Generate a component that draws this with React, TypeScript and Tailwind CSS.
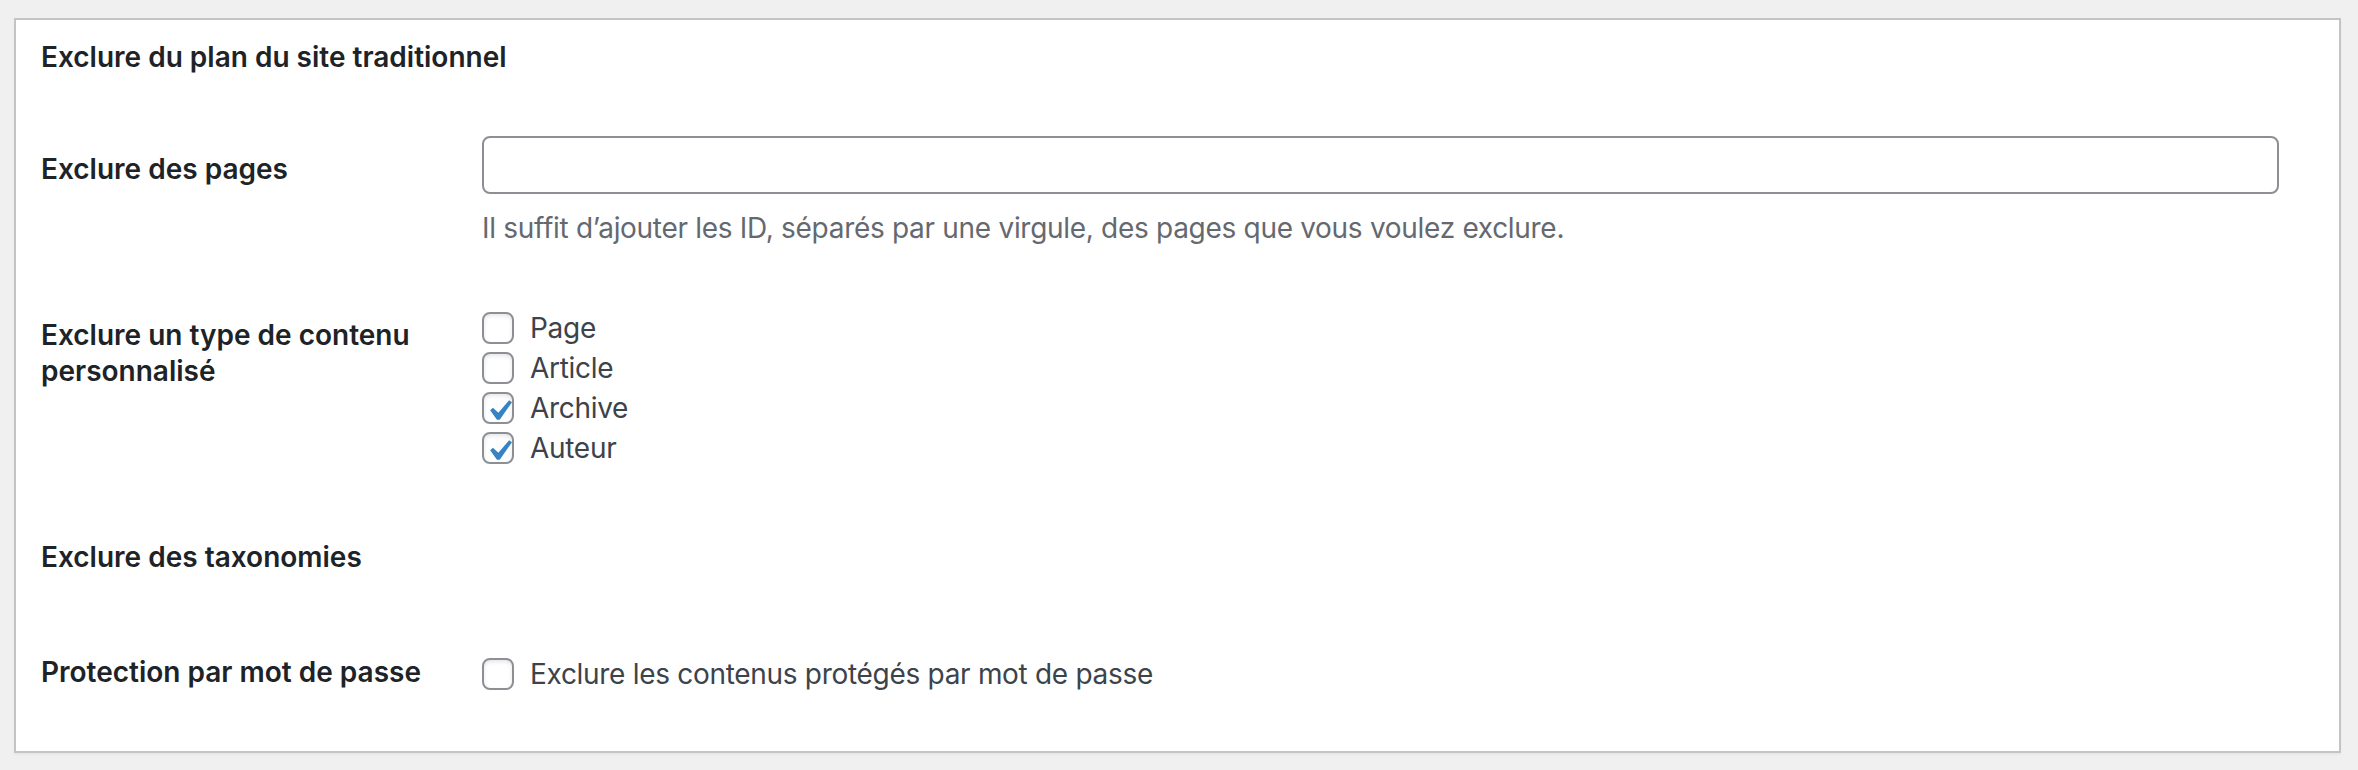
import { useState } from 'react';

const font = { fontFamily: 'Inter, "Noto Sans", sans-serif' };

function Check({ label, checked }: { label: string; checked: boolean }) {
  const [on, setOn] = useState(checked);
  return (
    <label className="flex items-center h-[36px] cursor-pointer" onClick={() => setOn(!on)}>
      <span className="relative w-[32px] h-[32px] shrink-0 rounded-[8px] border-2 border-[#8c8f94] bg-white shadow-[inset_0_2px_4px_rgba(0,0,0,0.1)]">
        {on && (
          <svg viewBox="0 0 20 20" className="absolute left-[-6px] top-[-4px] w-[42px] h-[42px]">
            <path d="M14.83 4.89l1.34.94-5.81 8.38H9.02L5.78 9.67l1.34-1.25 2.57 2.4z" fill="#3582c4" />
          </svg>
        )}
      </span>
      <span className="ml-[16px] text-[28px] leading-[36px] tracking-[-0.3px] text-[#3c434a]">{label}</span>
    </label>
  );
}

export default function App() {
  const [ids, setIds] = useState('');

  return (
    <div className="min-h-screen w-[2358px] h-[770px] bg-[#f0f0f1] pt-[18px]" style={font}>
      <div className="ml-[14px] w-[2327px] bg-white border-2 border-[#c3c4c7] shadow-[0_2px_2px_rgba(0,0,0,0.04)] pl-[25px] pt-[19px] pb-[59px]">
        <h2 className="text-[28px] leading-[36px] font-semibold text-[#1d2327]">Exclure du plan du site traditionnel</h2>

        {/* pages */}
        <div className="flex mt-[61px]">
          <div className="w-[441px] shrink-0 pt-[15px] text-[28px] leading-[36px] font-semibold text-[#1d2327]">Exclure des pages</div>
          <div className="flex-1 pr-[60px]">
            <input
              type="text"
              value={ids}
              onChange={(e) => setIds(e.target.value)}
              className="block w-full h-[58px] rounded-[8px] border-2 border-[#8c8f94] px-[16px] text-[28px] text-[#2c3338] outline-none"
            />
            <p className="mt-[17px] text-[28px] leading-[34px] tracking-[-0.3px] text-[#646970]">
              Il suffit d’ajouter les ID, séparés par une virgule, des pages que vous voulez exclure.
            </p>
          </div>
        </div>

        {/* post types */}
        <div className="flex mt-[65px]">
          <div className="w-[441px] shrink-0 pt-[7px] text-[28px] leading-[36px] font-semibold text-[#1d2327]">
            Exclure un type de contenu
            <br />
            personnalisé
          </div>
          <div className="flex flex-col gap-[4px]">
            <Check label="Page" checked={false} />
            <Check label="Article" checked={false} />
            <Check label="Archive" checked={true} />
            <Check label="Auteur" checked={true} />
          </div>
        </div>

        {/* taxonomies */}
        <div className="flex mt-[73px]">
          <div className="w-[441px] shrink-0 text-[28px] leading-[36px] font-semibold text-[#1d2327]">Exclure des taxonomies</div>
        </div>

        {/* password */}
        <div className="flex mt-[79px]">
          <div className="w-[441px] shrink-0 text-[28px] leading-[36px] font-semibold text-[#1d2327]">Protection par mot de passe</div>
          <div className="pt-[2px]">
            <Check label="Exclure les contenus protégés par mot de passe" checked={false} />
          </div>
        </div>
      </div>
    </div>
  );
}
